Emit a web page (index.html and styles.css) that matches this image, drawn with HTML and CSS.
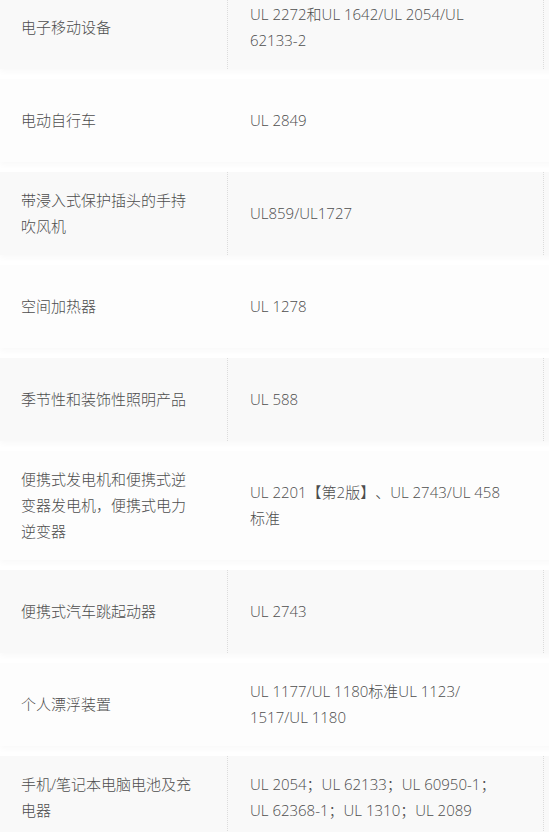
FILE: index.html
```html
<!DOCTYPE html>
<html lang="zh-CN">
<head>
<meta charset="utf-8">
<title>UL 标准</title>
<link rel="stylesheet" href="styles.css">
</head>
<body>
<div class="table">
  <div class="row odd">
    <div class="cell c1">电子移动设备</div>
    <div class="cell c2">UL 2272和UL 1642/UL 2054/UL 62133-2</div>
    <div class="cell c3"></div>
  </div>
  <div class="row even">
    <div class="cell c1">电动自行车</div>
    <div class="cell c2">UL 2849</div>
    <div class="cell c3"></div>
  </div>
  <div class="row odd">
    <div class="cell c1">带浸入式保护插头的手持吹风机</div>
    <div class="cell c2">UL859/UL1727</div>
    <div class="cell c3"></div>
  </div>
  <div class="row even">
    <div class="cell c1">空间加热器</div>
    <div class="cell c2">UL 1278</div>
    <div class="cell c3"></div>
  </div>
  <div class="row odd">
    <div class="cell c1">季节性和装饰性照明产品</div>
    <div class="cell c2">UL 588</div>
    <div class="cell c3"></div>
  </div>
  <div class="row even">
    <div class="cell c1">便携式发电机和便携式逆变器发电机，便携式电力逆变器</div>
    <div class="cell c2">UL 2201【第2版】、UL 2743/UL 458标准</div>
    <div class="cell c3"></div>
  </div>
  <div class="row odd">
    <div class="cell c1">便携式汽车跳起动器</div>
    <div class="cell c2">UL 2743</div>
    <div class="cell c3"></div>
  </div>
  <div class="row even">
    <div class="cell c1">个人漂浮装置</div>
    <div class="cell c2">UL 1177/UL 1180标准UL 1123/ 1517/UL 1180</div>
    <div class="cell c3"></div>
  </div>
  <div class="row odd last">
    <div class="cell c1">手机/笔记本电脑电池及充电器</div>
    <div class="cell c2">UL 2054；UL 62133；UL 60950-1；UL 62368-1；UL 1310；UL 2089</div>
    <div class="cell c3"></div>
  </div>
</div>
</body>
</html>
```

FILE: styles.css
```css
html, body {
  margin: 0;
  padding: 0;
  background: #ffffff;
  overflow: hidden;
}

body {
  width: 549px;
  height: 832px;
  font-family: "Open Sans", "Noto Sans CJK SC", sans-serif;
  font-weight: 300;
  font-size: 15px;
  line-height: 26px;
  color: #4d4d4d;
  text-spacing-trim: space-all;
}

.table {
  margin-top: -14px;
  width: 700px;
  display: flex;
  flex-direction: column;
  gap: 10px;
}

.row {
  display: grid;
  grid-template-columns: 227px 316px 1fr;
  min-height: 83px;
  box-shadow: 0 3px 6px rgba(0, 0, 0, 0.028);
}

.row.odd {
  background: #f9f9f9;
}

.row.even {
  background: #fdfdfd;
}

.cell {
  display: flex;
  align-items: center;
  box-sizing: border-box;
  padding: 15px 0 16px 0;
}

.c1 {
  padding-left: 21px;
  padding-right: 34px;
}

.c2 {
  padding-left: 22px;
  padding-right: 40px;
}

.odd .c2,
.odd .c3 {
  border-left: 1px dotted #dcdcdc;
}

.even .c2,
.even .c3 {
  border-left: 1px dotted transparent;
}
```
